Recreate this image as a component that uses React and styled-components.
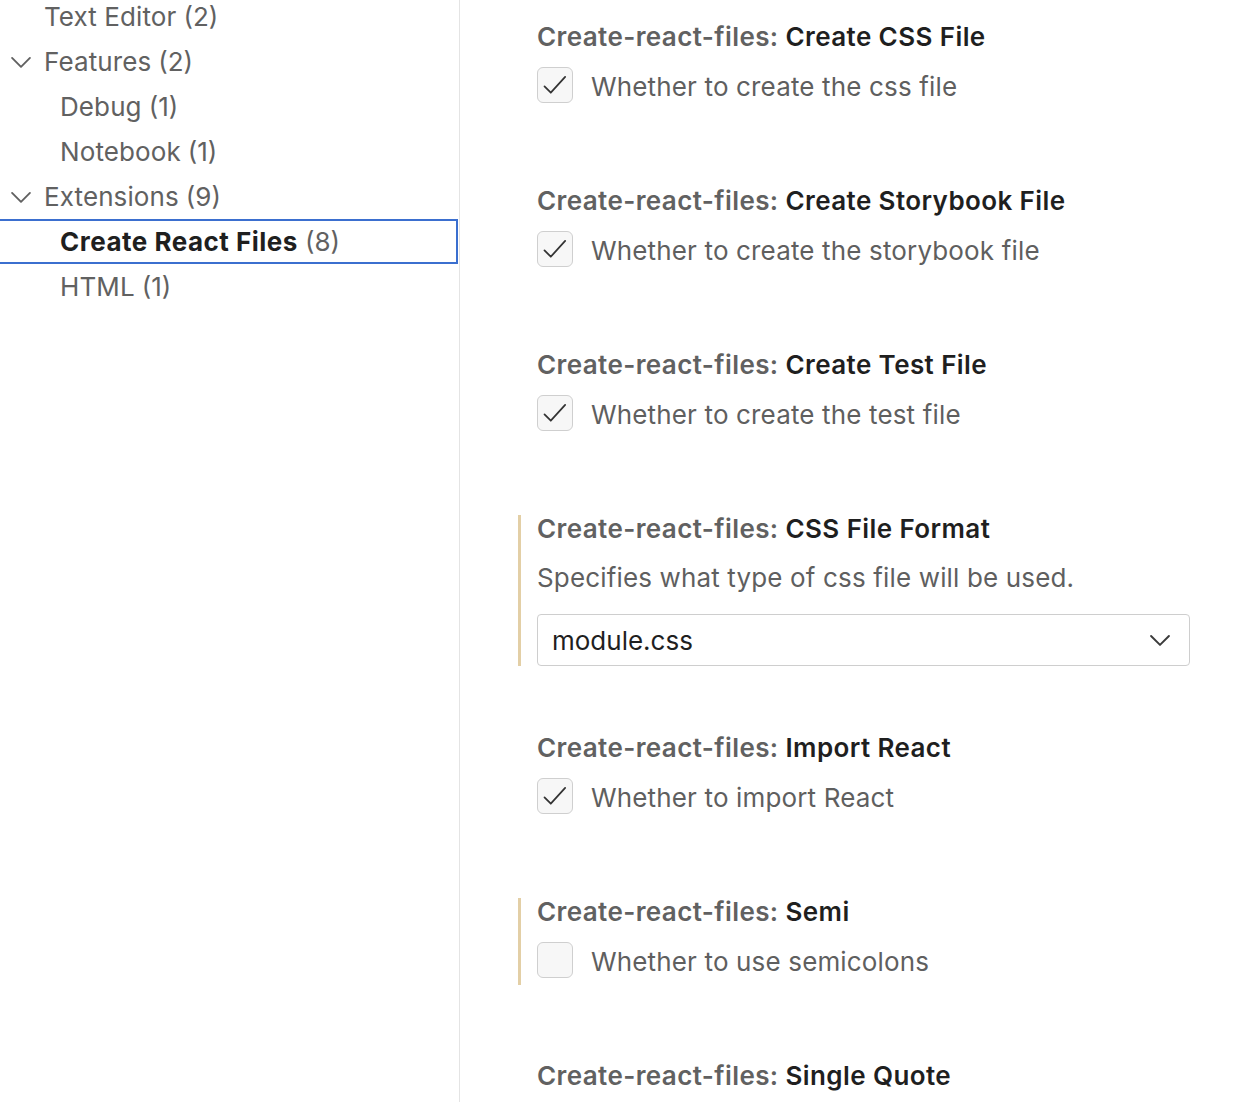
import React from 'react'
import styled, { createGlobalStyle } from 'styled-components'

const Global = createGlobalStyle`
  html, body {
    margin: 0;
    padding: 0;
    background: #ffffff;
    overflow: hidden;
  }
  body {
    font-family: Inter, "Noto Sans", "Liberation Sans", sans-serif;
    -webkit-font-smoothing: antialiased;
  }
`;

const Page = styled.div`
  display: flex;
  width: 1246px;
  height: 1102px;
  overflow: hidden;
  background: #ffffff;
`;

const Sidebar = styled.div`
  width: 459px;
  flex-shrink: 0;
  border-right: 1px solid #e4e4e4;
  display: flex;
  flex-direction: column;
  margin-top: -6px;
`;

const TreeRow = styled.div`
  height: 45px;
  box-sizing: border-box;
  display: flex;
  align-items: center;
  padding-left: ${({ $level }) => ($level === 2 ? 60 : 44)}px;
  position: relative;
  font-size: 26px;
  color: #616161;
  border: 2px solid ${({ $selected }) => ($selected ? '#3b6fcf' : 'transparent')};
  border-left: none;
  margin-right: 1px;
`;

const Twisty = styled.span`
  position: absolute;
  left: 8px;
  top: 50%;
  width: 26px;
  height: 26px;
  margin-top: -13px;
  display: flex;
`;

const Label = styled.span`
  font-weight: ${({ $selected }) => ($selected ? 700 : 400)};
  letter-spacing: ${({ $selected }) => ($selected ? '0.5px' : '0.1px')};
  color: ${({ $selected }) => ($selected ? '#1f1f1f' : '#616161')};
  margin-right: 7px;
`;

const Count = styled.span`
  color: #616161;
`;

const Content = styled.div`
  flex: 1;
  padding: 23px 0 0 58px;
  display: flex;
  flex-direction: column;
`;

const Setting = styled.div`
  border-left: 3px solid ${({ $modified }) => ($modified ? '#e3cfa6' : 'transparent')};
  padding-left: 16px;
  margin-bottom: ${({ $kind }) => ($kind === 'select' ? 68 : 77)}px;
  width: 653px;
`;

const Title = styled.div`
  font-size: 26px;
  line-height: 28px;
  font-weight: 600;
  letter-spacing: 0.4px;
  color: #616161;
  white-space: nowrap;
`;

const Key = styled.span`
  color: #1f1f1f;
`;

const CheckRow = styled.label`
  display: flex;
  align-items: center;
  height: 36px;
  margin-top: 16px;
  padding-bottom: 7px;
  gap: 18px;
`;

const Box = styled.span`
  width: 36px;
  height: 36px;
  box-sizing: border-box;
  border: 1px solid #cfcfcf;
  border-radius: 6px;
  background: #f7f7f7;
  display: flex;
  align-items: center;
  justify-content: center;
  flex-shrink: 0;
`;

const Description = styled.span`
  font-size: 26px;
  line-height: 32px;
  padding-top: 4px;
  letter-spacing: 0.15px;
  color: #5f5f5f;
`;

const SelectDescription = styled.div`
  font-size: 26px;
  line-height: 28px;
  letter-spacing: 0.15px;
  color: #5f5f5f;
  margin-top: 21px;
`;

const Select = styled.div`
  margin-top: 22px;
  height: 52px;
  box-sizing: border-box;
  border: 1px solid #cecece;
  border-radius: 4px;
  display: flex;
  align-items: center;
  justify-content: space-between;
  padding: 0 16px 0 14px;
  font-size: 26px;
  color: #1f1f1f;
`;

const Chevron = ({ size = 24, color = '#424242', width = 1.3 }) => (
  <svg width={size} height={size} viewBox="0 0 16 16" fill="none">
    <path d="M2.5 5.5 L8 11 L13.5 5.5" stroke={color} strokeWidth={width} strokeLinecap="round" strokeLinejoin="round" />
  </svg>
);

const Check = () => (
  <svg width="28" height="28" viewBox="0 0 16 16" fill="none">
    <path d="M2 8.8 L5.6 12.4 L13.8 3.4" stroke="#333333" strokeWidth="1" strokeLinecap="round" strokeLinejoin="round" />
  </svg>
);

const tree = [
  { label: 'Text Editor', count: 2, level: 1 },
  { label: 'Features', count: 2, level: 1, open: true },
  { label: 'Debug', count: 1, level: 2 },
  { label: 'Notebook', count: 1, level: 2 },
  { label: 'Extensions', count: 9, level: 1, open: true },
  { label: 'Create React Files', count: 8, level: 2, selected: true },
  { label: 'HTML', count: 1, level: 2 },
];

// the last one only shows its title, the rest is below the fold
const settings = [
  { key: 'Create CSS File', desc: 'Whether to create the css file', checked: true },
  { key: 'Create Storybook File', desc: 'Whether to create the storybook file', checked: true },
  { key: 'Create Test File', desc: 'Whether to create the test file', checked: true },
  { key: 'CSS File Format', desc: 'Specifies what type of css file will be used.', select: 'module.css', modified: true },
  { key: 'Import React', desc: 'Whether to import React', checked: true },
  { key: 'Semi', desc: 'Whether to use semicolons', checked: false, modified: true },
  { key: 'Single Quote' },
];

const App = () => {
  return (
    <Page>
      <Global />
      <Sidebar>
        {tree.map((t) => (
          <TreeRow key={t.label} $level={t.level} $selected={t.selected}>
            {t.open && (
              <Twisty>
                <Chevron size={26} color="#616161" width={1.15} />
              </Twisty>
            )}
            <Label $selected={t.selected}>{t.label}</Label>
            <Count>({t.count})</Count>
          </TreeRow>
        ))}
      </Sidebar>
      <Content>
        {settings.map((s) => (
          <Setting key={s.key} $modified={s.modified} $kind={s.select ? 'select' : 'check'}>
            <Title>
              Create-react-files: <Key>{s.key}</Key>
            </Title>
            {s.select && (
              <>
                <SelectDescription>{s.desc}</SelectDescription>
                <Select>
                  <span>{s.select}</span>
                  <Chevron size={26} color="#3b3b3b" width={1.2} />
                </Select>
              </>
            )}
            {!s.select && s.desc && (
              <CheckRow>
                <Box>{s.checked && <Check />}</Box>
                <Description>{s.desc}</Description>
              </CheckRow>
            )}
          </Setting>
        ))}
      </Content>
    </Page>
  )
}

export default App
